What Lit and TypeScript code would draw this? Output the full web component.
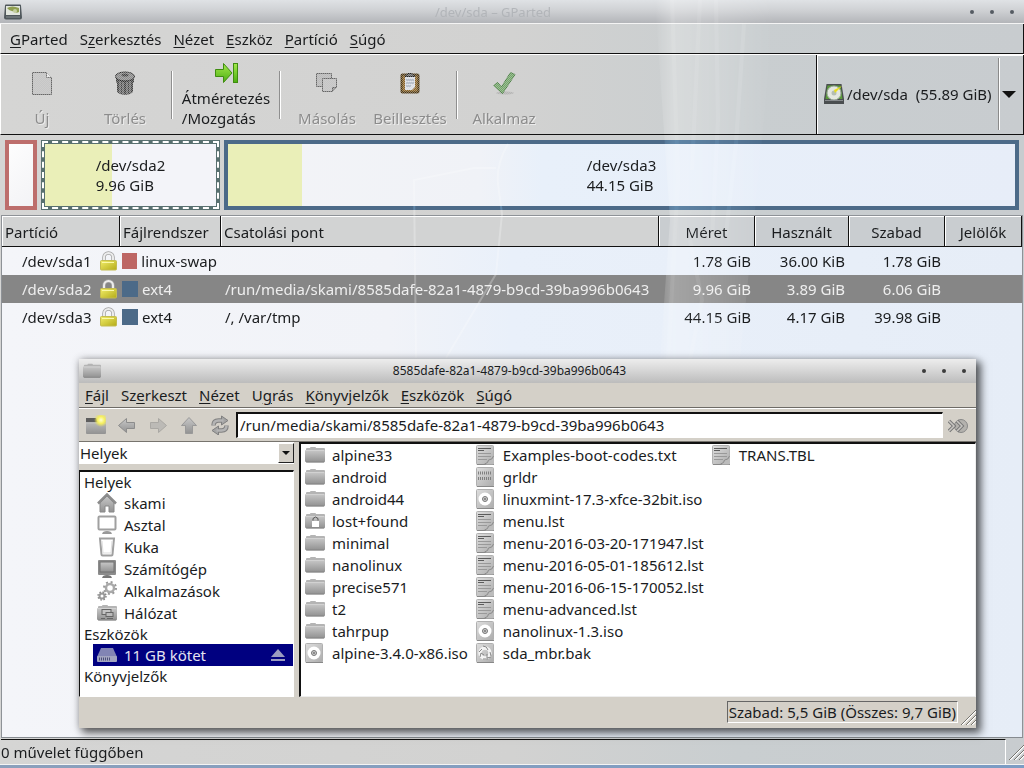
import { LitElement, html, css, svg } from "lit";
import { customElement, property, state } from "lit/decorators.js";
import { classMap } from "lit/directives/class-map.js";

const base = css`
  * { box-sizing: border-box; }
  button, input, select {
    font: inherit;
    color: inherit;
    background: none;
    border: 0;
    border-radius: 0;
    margin: 0;
    padding: 0;
    outline: none;
    appearance: none;
  }
  svg { display: block; flex: none; }
  u { text-decoration: underline; text-underline-offset: 2px; text-decoration-thickness: 1px; }
`;

const defs = html`<svg width="0" height="0" style="position:absolute" aria-hidden="true"><defs>
  <linearGradient id="g" x1="0" y1="0" x2="0" y2="1"><stop offset="0" stop-color="#c8c8c8"/><stop offset="1" stop-color="#929292"/></linearGradient>
  <linearGradient id="l" x1="0" y1="0" x2="1" y2="1"><stop offset="0" stop-color="#dedede"/><stop offset="1" stop-color="#acacac"/></linearGradient>
  <linearGradient id="y" x1="0" y1="0" x2="1" y2="1"><stop offset="0" stop-color="#f2ee6a"/><stop offset="1" stop-color="#b4ab18"/></linearGradient>
  <linearGradient id="gr" x1="0" y1="0" x2="0" y2="1"><stop offset="0" stop-color="#a4e84c"/><stop offset="1" stop-color="#4caf12"/></linearGradient>
  <radialGradient id="glow"><stop offset="0" stop-color="#ffffd0"/><stop offset=".5" stop-color="#f6f060"/><stop offset="1" stop-color="#f0e840" stop-opacity="0"/></radialGradient>
  <pattern id="chk" width="2" height="2" patternUnits="userSpaceOnUse"><rect width="1" height="1" fill="#fff"/><rect x="1" y="1" width="1" height="1" fill="#fff"/></pattern>
  <mask id="m" maskUnits="userSpaceOnUse" x="0" y="0" width="24" height="24"><rect width="24" height="24" fill="#888"/><rect width="24" height="24" fill="url(#chk)" shape-rendering="crispEdges"/></mask>
</defs></svg>`;

const icon = (w: number, h: number, body: unknown) =>
  html`<svg width=${w} height=${h} viewBox="0 0 ${w} ${h}" aria-hidden="true">${body}</svg>`;

const toolIcons: Record<string, unknown> = {
  new: icon(24, 24, svg`<g mask="url(#m)"><path d="M2.500 1.500h14l5 5v17h-19z" fill="#c6c6c6" stroke="#666"/><path d="M16.500 1.500v5h5" fill="#eee" stroke="#777"/></g>`),
  del: icon(24, 24, svg`<g mask="url(#m)"><path d="M3 6v5l1 1v8c1 5 15 5 16 0v-8l1-1V6z" fill="#444"/><path d="M7 10v12M10 11v12M14 11v12M17 10v12" stroke="#999"/><ellipse cx="12" cy="5.500" rx="9.500" ry="4.500" fill="#8a8a8a" stroke="#222"/><ellipse cx="12" cy="4" rx="3.500" ry="1.500" fill="#444"/></g>`),
  resize: icon(24, 24, svg`<path d="M1.500 8.500h8v-6l8.500 9.500-8.500 9.500v-6h-8z" fill="url(#gr)" stroke="#3f8d10"/><rect x="19.500" y="2.500" width="4" height="19" fill="url(#gr)" stroke="#3f8d10"/>`),
  copy: icon(24, 24, svg`<g mask="url(#m)"><path d="M1.500 2.500h15v9l-4 4h-11z" fill="#bbb" stroke="#666"/><path d="M7.500 7.500h14v9l-4 4h-10z" fill="#c6c6c6" stroke="#666"/><path d="M21.500 16.500h-4v4" fill="#999" stroke="#666"/></g>`),
  paste: icon(24, 24, svg`<g mask="url(#m)"><rect x="3.500" y="3.500" width="17" height="18" rx="1" fill="#8d6425" stroke="#4a3410" stroke-width="2"/><path d="M7 6h10v10l-3 3H7z" fill="#e2e6ee"/><path d="M8 9h8M8 12h8M8 15h5" stroke="#8794a8"/><path d="M7 5.500c0-2 3-1 3-3h4c0 2 3 1 3 3z" fill="#666" stroke="#222"/></g>`),
  apply: icon(24, 24, svg`<g mask="url(#m)"><ellipse cx="13" cy="22" rx="9" ry="1.500" fill="#999" opacity=".5"/><path d="M1.500 14.500l4-3 4 4.500 9-14.500 4.500 2-12.500 19z" fill="#72a868" stroke="#4c8044"/></g>`),
};

const diskIcon = icon(22, 22, svg`<path d="M3.500 1h15l2.500 15v5H1v-5z" fill="#4a4e50"/><path d="M4.500 2.500h13l2 13.500h-17z" fill="#5a9a3a"/><circle cx="11" cy="10" r="7" fill="#e4e8e0" stroke="#9aa89a"/><circle cx="11" cy="10" r="2.500" fill="#b4beb4"/><path d="M19 3l-8 4 1 3z" fill="#e8dc20"/><path d="M2 17.500h18" stroke="#878b8e"/>`);
const appIcon = icon(18, 16, svg`<path d="M1 1.500q0-1 1-1h14q1 0 1 1l1 12q0 2-2 2H2q-2 0-2-2z" fill="#50585c"/><rect x="2" y="2" width="14" height="9" fill="#e2e6de"/><path d="M3 4q5-3 12 0v4q-3 2-5-1-4 1-7-3z" fill="#8f9e50"/><circle cx="11" cy="7" r="2" fill="#c4cfa0"/><path d="M2 13h14" stroke="#888f92"/>`);
const lockIcon = icon(17, 20, svg`<path d="M4 10V6.500a4.500 4.500 0 0 1 9 0V10" fill="none" stroke="#a2a2a2" stroke-width="3.500"/><path d="M4 10V6.500a4.500 4.500 0 0 1 9 0V10" fill="none" stroke="#ececec" stroke-width="2"/><rect x=".5" y="9.500" width="16" height="9.500" rx="1" fill="url(#y)" stroke="#c4bc50"/><path d="M2 11.500h12" stroke="#fbf9a8"/>`);
const grip = html`<svg width="16" height="16" viewBox="0 0 16 16" aria-hidden="true"><path d="M2 16L16 2M7 16l9-9M12 16l4-4" stroke="#fff" stroke-width="1.500"/><path d="M1 16L16 1M6 16L16 6M11 16l5-5" stroke="#77756f"/></svg>`;
const dots = ["Kis méret", "Teljes méret", "Bezárás"].map(t => html`<button class="dot" aria-label=${t}></button>`);

// Wallpaper showing faintly through the translucent window.
const sheen = html`<svg class="sheen" viewBox="0 0 1024 768" preserveAspectRatio="none" aria-hidden="true">
  <defs><linearGradient id="st" x1="0" x2="1"><stop offset="0" stop-color="#fff" stop-opacity="0"/><stop offset=".15" stop-color="#fff" stop-opacity=".5"/><stop offset=".6" stop-color="#fff" stop-opacity=".25"/><stop offset="1" stop-color="#fff" stop-opacity="0"/></linearGradient></defs>
  <path d="M655 0h120l-15 160-20 200h-80l10-140z" fill="url(#st)"/>
  <path d="M672 0l6 180-10 180M700 0l-8 170M716 0l2 120-6 120M744 24l-8 120-10 90M690 240l12 60-12 60" fill="none" stroke="#fff" stroke-opacity=".2" stroke-width="4"/>
  <path d="M508 144q-12 20-10 40l4 30-6 60-50 84M416 358l-2-178 60-12h22" fill="none" stroke="#fff" stroke-opacity=".5" stroke-width="2"/>
</svg>`;

const folder = svg`<path d="M1 4q0-1 1-1h3q0-1 1-1h4q1 0 1 1h8q1 0 1 1v12q0 1.500-1.500 1.500h-16Q1 17.500 1 16z" fill="#b4b4b4"/><rect x="0" y="5" width="20" height="12" rx="1" fill="url(#g)"/><path d="M1 5.500h18" stroke="#d2d2d2"/><path d="M1 17h18" stroke="#848484"/>`;
const sheet = svg`<rect x=".5" y=".5" width="17" height="19" rx="1" fill="url(#l)" stroke="#b0b0b0"/><path d="M1 19.500h17" stroke="#888"/>`;
const files: Record<string, unknown> = {
  folder: icon(20, 20, folder),
  locked: icon(20, 20, svg`${folder}<rect x="7" y="10" width="7" height="6" fill="#fff"/><path d="M8 9.500V7.500q2.500-3 5 0v2" fill="none" stroke="#555"/>`),
  text: icon(20, 20, svg`${sheet}<path d="M2 8.500h13M2 11.500h13M2 14.500h9" stroke="#999"/><path d="M2 3.500h13M2 5.500h6" stroke="#5c5c5c"/><path d="M18 11q-1 4-5 4 0 3-4 4.500h7.500q1.500 0 1.500-1.500z" fill="#bcbcbc"/><path d="M17.500 11q-1 4-5 4 0 3-4 4" fill="none" stroke="#8c8c8c"/>`),
  binary: icon(20, 20, svg`${sheet}<path d="M2 6h14M2 11.500h14" stroke="#808080" stroke-width="3" stroke-dasharray="1 1"/>`),
  iso: icon(20, 20, svg`${sheet}<circle cx="9" cy="10" r="6.500" fill="#fff"/><circle cx="9" cy="10" r="2.500" fill="#ccc" stroke="#777"/><circle cx="9" cy="10" r="1" fill="#777"/>`),
  bak: icon(20, 20, svg`${sheet}<circle cx="9" cy="10" r="5" fill="none" stroke="#f4f4f4" stroke-width="3.500"/><path d="M7 3q4 0 5 4M4 14l1-4 3 2M15 14l-4 1v-4M3 9l3-3M14 9l1 4M7 16h5" fill="none" stroke="#888"/>`),
};
const places: Record<string, unknown> = {
  home: icon(20, 20, svg`<path d="M3 10v9h5v-6h4v6h5v-9l-7-7z" fill="url(#g)" stroke="#888"/><path d="M1 10.500L10 1.500l9 9" fill="none" stroke="#8c8c8c" stroke-width="2.500"/>`),
  desktop: icon(20, 20, svg`<path d="M6 17q4-2 8 0l1 2H5z" fill="#999"/><rect x="1.500" y="1.500" width="17" height="13" rx="1" fill="#fff" stroke="#a0a0a0" stroke-width="2"/>`),
  trash: icon(20, 20, svg`<path d="M3 1.500h14l-1.500 16q0 1-1 1h-9q-1 0-1-1z" fill="#fff" stroke="#a0a0a0" stroke-width="2"/><path d="M5 4l1 12h8l1-12" fill="none" stroke="#ddd"/>`),
  computer: icon(20, 20, svg`<path d="M6 17q4-2 8 0l1 2H5z" fill="#777"/><rect x="1" y="1" width="18" height="15" rx="1" fill="#8c8c8c"/><rect x="3" y="3" width="14" height="10" fill="url(#g)" stroke="#707070"/>`),
  apps: icon(20, 20, svg`<circle cx="13" cy="7" r="4" fill="none" stroke="#aaa" stroke-width="2.500"/><circle cx="13" cy="7" r="6" fill="none" stroke="#999" stroke-width="2" stroke-dasharray="2 2.700"/><circle cx="5" cy="15" r="2.500" fill="none" stroke="#999" stroke-width="2"/><circle cx="5" cy="15" r="4" fill="none" stroke="#888" stroke-width="1.500" stroke-dasharray="1.500 1.650"/>`),
  network: icon(20, 20, svg`${folder}<rect x="5" y="6.500" width="9" height="5" fill="#c4c4c4" stroke="#666"/><rect x="9" y="9.500" width="7" height="4" fill="#bbb" stroke="#666"/><path d="M4 15.500h4M10 15.500h6" stroke="#666"/>`),
  drive: icon(20, 20, svg`<path d="M4 3h12l4 9H0z" fill="#8285b4"/><rect y="11" width="20" height="6" rx="1" fill="#a2a5c0"/><path d="M2 14h12" stroke="#4c4f78" stroke-width="3" stroke-dasharray="1 1"/>`),
};
const eject = icon(14, 14, svg`<path d="M7 1l7 8H0z" fill="#9a9cc0"/><rect y="11" width="14" height="2" fill="#9a9cc0"/>`);

@customElement("menu-bar")
class MenuBar extends LitElement {
  @property({ attribute: false }) items: string[] = [];
  static styles = [base, css`
    :host { display: flex; }
    button { padding: 0 6px; white-space: nowrap; }
  `];
  render() {
    return this.items.map(t => {
      const [a, b, c] = t.split("_");
      return html`<button>${a}<u>${b}</u>${c}</button>`;
    });
  }
}

interface Part { dev: string; fs: string; color: string; mount: string; size: string; used: string; free: string; }

@customElement("partition-window")
class PartitionWindow extends LitElement {
  @state() selected = 1;
  parts: Part[] = [
    { dev: "/dev/sda1", fs: "linux-swap", color: "red", mount: "", size: "1.78 GiB", used: "36.00 KiB", free: "1.78 GiB" },
    { dev: "/dev/sda2", fs: "ext4", color: "blue", mount: "/run/media/skami/8585dafe-82a1-4879-b9cd-39ba996b0643", size: "9.96 GiB", used: "3.89 GiB", free: "6.06 GiB" },
    { dev: "/dev/sda3", fs: "ext4", color: "blue", mount: "/, /var/tmp", size: "44.15 GiB", used: "4.17 GiB", free: "39.98 GiB" },
  ];
  static styles = [base, css`
    :host { position: relative; isolation: isolate; display: flex; flex-direction: column; height: 100%; background: linear-gradient(90deg, #d5d5d4, #d2d2d1 50%, #c9ced0 72%, #c8cccf); }
    .sheen { position: absolute; inset: 0; width: 100%; height: 100%; pointer-events: none; mix-blend-mode: overlay; opacity: .5; }
    .title {
      display: flex; align-items: center; height: 24px; flex: none; padding: 0 10px 0 4px;
      background: linear-gradient(#dfe2e5, #cfd1d4 45%, #b3b5b9); border-bottom: 1px solid #f4f4f4;
    }
    .title h1 { flex: 1; margin: 0; padding-right: 6px; text-align: center; font-size: 13px; font-weight: 400; color: #b2b5b9; }
    .dots { display: flex; gap: 16px; }
    .dot { width: 4px; height: 4px; border-radius: 50%; background: #555b62; }
    menu-bar { height: 30px; flex: none; padding-left: 3px; border-left: 1px solid #fff; border-right: 1px solid #111; border-bottom: 1px solid #111; }
    .tools { display: flex; flex: none; height: 81px; border-top: 1px solid #fff; border-bottom: 1px solid #111; border-left: 1px solid #fff; }
    .set { display: flex; flex: 1; gap: 1px; }
    .tool { display: flex; flex-direction: column; align-items: center; justify-content: space-between; width: 82px; padding: 16px 0 6px; line-height: 20px; }
    .tool:disabled { color: #8c8c8c; text-shadow: 1px 1px #ececec; }
    .tool.wide { width: 96px; padding-top: 6px; text-align: left; }
    .sep { width: 10px; padding: 16px 4px; }
    .sep::before { content: ""; display: block; height: 48px; border-left: 1px solid #8f8f8f; border-right: 1px solid #fff; }
    .device { display: flex; align-items: center; gap: 2px; padding: 0 0 2px 6px; border-left: 1px solid #111; border-right: 1px solid #111; box-shadow: inset 1px 1px #fff; position: relative; }
    .device select { width: 176px; height: 72px; padding-right: 26px; background: linear-gradient(#8a8a8a, #8a8a8a) 151px 0 / 1px 100% no-repeat, linear-gradient(#fff, #fff) 152px 0 / 1px 100% no-repeat; }
    .arrow { position: absolute; right: 7px; top: 36px; pointer-events: none; border: 7px solid transparent; border-top-color: #111; border-bottom: 0; }
    .map { display: grid; grid-template-columns: 32fr 179fr 795fr; gap: 4px; height: 80px; flex: none; padding: 5px; }
    .part { position: relative; border: 4px solid #4c6a88; background: linear-gradient(90deg, #f3f4f7, #f0f2f7 32%, #e8f0fa 40%, #e7edf8); display: flex; height: 70px; }
    .part.red { border-color: #bd6e6c; background: linear-gradient(135deg, #fdfdfd, #f3f3f6); }
    .part.sel { border-color: #587070; background: #f3f4f9; }
    .part.sel::after { content: ""; position: absolute; inset: -3px; border: 2px dashed #fff; }
    .fill { background: #eaefb8; }
    .part span { position: absolute; inset: 0; display: grid; place-content: center; line-height: 20px; }
    .frame { flex: 1; margin: 0 1px; border: 1px solid #8e9297; border-bottom-color: #868b90; background: linear-gradient(90deg, #f4f5f9, #f1f3f8 38%, #e9f0fa 50%, #e6edf7); }
    .view { width: 100%; border-collapse: separate; border-spacing: 0; table-layout: fixed; }
    th { height: 31px; padding: 1px 0 0 3px; font-weight: 400; text-align: left; border-right: 1px solid #111; border-bottom: 1px solid #111; background: linear-gradient(#fff, #fff) 0 0 / 1px 100% no-repeat, linear-gradient(#fff, #fff) 0 0 / 100% 1px no-repeat, #d2d3d3; }
    th.n { text-align: center; padding-left: 0; background-color: #c9cdd0; }
    td { height: 28px; padding: 0 4px; white-space: nowrap; }
    td.n { text-align: right; }
    td:first-child { padding: 0 3px 0 20px; }
    .cell { display: flex; align-items: center; justify-content: space-between; }
    td:nth-child(2) { padding-left: 2px; }
    td:nth-child(2) .cell { justify-content: flex-start; gap: 4px; }
    .sw { width: 16px; height: 16px; background: #4c6a88; }
    .sw.red { background: #bd6664; }
    tr.on td { background: #868686; color: #eee; }
    .status { display: flex; flex: none; height: 26px; align-items: center; margin-top: 1px; padding-left: 1px; border-bottom: 1px solid #f4f4f4; }
    .status p { flex: 1; margin: 0 2px 0 0; height: 25px; line-height: 24px; border-top: 1px solid #111; border-right: 1px solid #fff; }
    .desk { flex: none; height: 3px; background: linear-gradient(90deg, #8ba0bc, #7c9cc4); }
  `];
  tool(id: string, label: string) {
    return html`<button class="tool" disabled>${toolIcons[id]}<span>${label}</span></button>`;
  }
  render() {
    return html`${defs}
      <header class="title">${appIcon}<h1>/dev/sda – GParted</h1><div class="dots">${dots}</div></header>
      <menu-bar .items=${["_G_Parted", "S_z_erkesztés", "_N_ézet", "_E_szköz", "_P_artíció", "_S_úgó"]}></menu-bar>
      <div class="tools">
        <div class="set">
          ${this.tool("new", "Új")}${this.tool("del", "Törlés")}<i class="sep"></i>
          <button class="tool wide">${toolIcons.resize}<span>Átméretezés<br>/Mozgatás</span></button><i class="sep"></i>
          ${this.tool("copy", "Másolás")}${this.tool("paste", "Beillesztés")}<i class="sep"></i>
          ${this.tool("apply", "Alkalmaz")}
        </div>
        <div class="device">${diskIcon}<select aria-label="Eszköz"><option>/dev/sda\u00a0 (55.89 GiB)</option></select><i class="arrow"></i></div>
      </div>
      <div class="map">
        <div class="part red"></div>
        <div class="part sel"><i class="fill" style="width:39%"></i><span>/dev/sda2<br>9.96 GiB</span></div>
        <div class="part"><i class="fill" style="width:9.4%"></i><span>/dev/sda3<br>44.15 GiB</span></div>
      </div>
      <div class="frame"><table class="view">
        <colgroup><col width="118"><col width="101"><col><col width="96"><col width="94"><col width="96"><col width="77"></colgroup>
        <thead><tr><th>Partíció</th><th>Fájlrendszer</th><th>Csatolási pont</th><th class="n">Méret</th><th class="n">Használt</th><th class="n">Szabad</th><th class="n">Jelölők</th></tr></thead>
        <tbody>${this.parts.map((p, i) => html`<tr class=${classMap({ on: i === this.selected })} @click=${() => (this.selected = i)}>
          <td><div class="cell">${p.dev}${lockIcon}</div></td>
          <td><div class="cell"><i class=${classMap({ sw: true, red: p.color === "red" })}></i>${p.fs}</div></td>
          <td>${p.mount}</td><td class="n">${p.size}</td><td class="n">${p.used}</td><td class="n">${p.free}</td><td></td></tr>`)}</tbody>
      </table></div>
      <footer class="status"><p>0 művelet függőben</p>${grip}</footer>
      <div class="desk"></div>
      ${sheen}`;
  }
}

@customElement("file-window")
class FileWindow extends LitElement {
  entries: [string, string][] = [
    ["folder", "alpine33"], ["folder", "android"], ["folder", "android44"], ["locked", "lost+found"], ["folder", "minimal"],
    ["folder", "nanolinux"], ["folder", "precise571"], ["folder", "t2"], ["folder", "tahrpup"], ["iso", "alpine-3.4.0-x86.iso"],
    ["text", "Examples-boot-codes.txt"], ["binary", "grldr"], ["iso", "linuxmint-17.3-xfce-32bit.iso"], ["text", "menu.lst"],
    ["text", "menu-2016-03-20-171947.lst"], ["text", "menu-2016-05-01-185612.lst"], ["text", "menu-2016-06-15-170052.lst"],
    ["text", "menu-advanced.lst"], ["iso", "nanolinux-1.3.iso"], ["bak", "sda_mbr.bak"], ["text", "TRANS.TBL"],
  ];
  places: [string, string][] = [["home", "skami"], ["desktop", "Asztal"], ["trash", "Kuka"], ["computer", "Számítógép"], ["apps", "Alkalmazások"], ["network", "Hálózat"]];
  static styles = [base, css`
    :host { display: flex; flex-direction: column; background: #d4d0c8; box-shadow: 4px 4px 8px 1px #0009, 0 0 8px #0003; }
    .title { display: flex; align-items: center; height: 24px; flex: none; padding: 0 10px 0 4px; background: linear-gradient(#ededed, #dadada 40%, #bcbcbc); }
    .title svg { width: 18px; height: 18px; }
    h2 { flex: 1; margin: 0; padding-right: 4px; text-align: center; font-size: 12px; font-weight: 400; }
    .dots { display: flex; gap: 16px; }
    .dot { width: 4px; height: 4px; border-radius: 50%; background: #3c3c3c; }
    menu-bar { height: 25px; flex: none; border-bottom: 1px solid #6e6b66; }
    .bar { display: flex; align-items: center; height: 34px; flex: none; border-top: 1px solid #fff; border-bottom: 1px solid #77746e; padding: 0 8px 0 7px; gap: 11px; }
    .bar input { flex: 1; min-width: 0; height: 26px; margin: 0 -6px 0 -5px; padding: 0 2px 2px; background: #fff; border: 1px solid #fff; border-top: 2px solid #111; border-left: 2px solid #111; }
    .body { display: flex; flex: 1; min-height: 0; gap: 5px; }
    .side { display: flex; flex-direction: column; width: 215px; gap: 6px; }
    .pick { position: relative; display: flex; flex: none; }
    .pick select { flex: 1; height: 22px; padding: 0 20px 0 1px; background: #fff; }
    .btn { position: absolute; right: 0; top: 1px; width: 16px; height: 20px; pointer-events: none; background: #d4d0c8; border: 1px solid #fff; border-right-color: #222; border-bottom-color: #222; display: grid; place-content: center; }
    .btn::after { content: ""; border: 4px solid transparent; border-top-color: #111; border-bottom: 0; }
    .tree { flex: 1; background: #fff; border: 1px solid #fff; border-top: 2px solid #111; border-left: 1px solid #111; }
    .head { height: 20px; line-height: 20px; padding-left: 4px; }
    .item { display: flex; align-items: center; width: calc(100% - 13px); height: 22px; margin-left: 13px; padding: 0 8px 0 4px; gap: 7px; text-align: left; }
    .item span { flex: 1; }
    .item.on { background: #000080; color: #e4e4f0; }
    .files { flex: 1; display: grid; grid-auto-flow: column; grid-template-rows: repeat(10, 22px); grid-auto-columns: max-content; column-gap: 8px; background: #fff; border: 1px solid #eee; border-left: 2px solid #111; border-top: 2px solid #111; padding-left: 4px; }
    .file { display: flex; align-items: center; gap: 7px; }
    .status { display: flex; flex: none; height: 31px; justify-content: flex-end; align-items: flex-end; }
    .status p { margin: 0 2px 5px 0; padding: 0 1px; height: 22px; line-height: 21px; border: 1px solid #fff; border-top-color: #666; border-left-color: #666; }
    .status svg { margin-bottom: 3px; }
  `];
  render() {
    const nav = (label: string, body: unknown) => html`<button aria-label=${label}>${icon(20, 20, body)}</button>`;
    return html`${defs}
      <header class="title">${icon(20, 20, folder)}<h2>8585dafe-82a1-4879-b9cd-39ba996b0643</h2><div class="dots">${dots}</div></header>
      <menu-bar .items=${["_F_ájl", "Sz_e_rkeszt", "_N_ézet", "U_g_rás", "_K_önyvjelzők", "_E_szközök", "_S_úgó"]}></menu-bar>
      <div class="bar">
        ${nav("Új lap", svg`<rect y="3" width="20" height="16" rx="1" fill="url(#g)"/><path d="M0 7V3h10l2 4z" fill="#5e5e5e"/><path d="M0 8.500h20" stroke="#bbb"/><circle cx="15" cy="5" r="7" fill="url(#glow)"/>`)}
        ${nav("Vissza", svg`<path d="M1.500 10.500l8-7v4h8v6h-8v4z" fill="url(#g)" stroke="#8c8c8c"/>`)}
        ${nav("Előre", svg`<path d="M18.500 10.500l-8-7v4h-8v6h8v4z" fill="#bcbab6" stroke="#aaa8a4"/>`)}
        ${nav("Fel", svg`<path d="M10 2.500l7.500 8h-4v8h-7v-8h-4z" fill="url(#g)" stroke="#999"/>`)}
        ${nav("Frissítés", svg`<path d="M3.500 10.500q0-5 5-5h4M16.500 10.500q0 5-5 5h-4" fill="none" stroke="#808080" stroke-width="4.500"/><path d="M11.500 1L18 5.500l-6.500 4.500zM8.500 11L2 15.500 8.500 20z" fill="#a4a4a4" stroke="#808080"/><path d="M3.500 10.500q0-5 5-5h5M16.500 10.500q0 5-5 5h-5" fill="none" stroke="#b4b4b4" stroke-width="2.500"/>`)}
        <input aria-label="Hely" value="/run/media/skami/8585dafe-82a1-4879-b9cd-39ba996b0643">
        ${nav("Ugrás", svg`<circle cx="13" cy="11" r="6.500" fill="#b4b2ae" stroke="#888"/><path d="M1 6l5 5-5 5M9 6l5 5-5 5" fill="none" stroke="#777" stroke-width="3.500"/><path d="M1 6l5 5-5 5M9 6l5 5-5 5" fill="none" stroke="#c8c6c2" stroke-width="1.500"/>`)}
      </div>
      <div class="body">
        <div class="side">
          <div class="pick"><select aria-label="Oldalsáv"><option>Helyek</option></select><i class="btn"></i></div>
          <nav class="tree">
            <div class="head">Helyek</div>
            ${this.places.map(([k, t]) => html`<button class="item">${places[k]}<span>${t}</span></button>`)}
            <div class="head">Eszközök</div>
            <button class="item on">${places.drive}<span>11 GB kötet</span>${eject}</button>
            <div class="head">Könyvjelzők</div>
          </nav>
        </div>
        <div class="files">${this.entries.map(([k, t]) => html`<button class="file">${files[k]}<span>${t}</span></button>`)}</div>
      </div>
      <footer class="status"><p>Szabad: 5,5 GiB (Összes: 9,7 GiB)</p>${grip}</footer>`;
  }
}

@customElement("app-root")
class AppRoot extends LitElement {
  static styles = css`
    :host { display: block; position: relative; height: 100vh; overflow: hidden; font: 15px/20px "Noto Sans", sans-serif; color: #1a1c1e; }
    file-window { position: absolute; left: 79px; top: 359px; width: 897px; height: 369px; }
  `;
  render() {
    return html`<partition-window></partition-window><file-window></file-window>`;
  }
}
